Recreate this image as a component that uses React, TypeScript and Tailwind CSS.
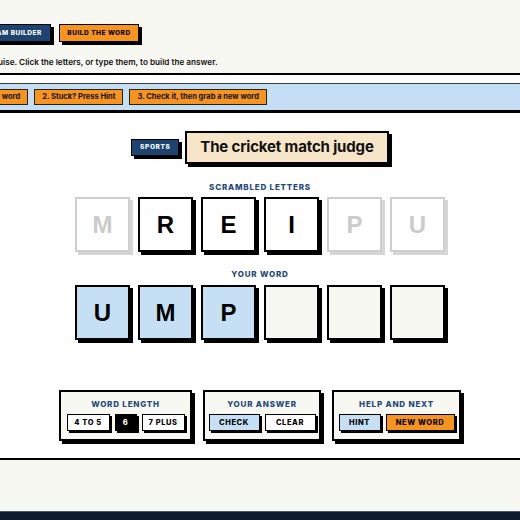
import React, { useState } from "react";

type TileState = "active" | "used" | "filled" | "empty";

const tileStyles: Record<TileState, string> = {
  active: "bg-white border-black shadow-[3px_3px_0_#000] text-black",
  used: "bg-white border-[#cfcfcf] shadow-[3px_3px_0_#d6d6d6] text-[#cbcbcb]",
  filled: "bg-[#c5e0f4] border-black shadow-[3px_3px_0_#000] text-black",
  empty: "bg-[#f8f8f3] border-black shadow-[3px_3px_0_#000] text-black",
};

const Tile: React.FC<{ letter?: string; state: TileState }> = ({ letter, state }) => (
  <div
    className={`w-[55px] h-[55px] border-2 flex items-center justify-center text-[24px] font-bold font-['Liberation_Sans',Arial,sans-serif] ${tileStyles[state]}`}
  >
    {letter}
  </div>
);

const Label: React.FC<{ children: React.ReactNode }> = ({ children }) => (
  <div className="text-[8px] font-extrabold tracking-[0.1em] text-[#23497a] text-center leading-none">
    {children}
  </div>
);

const SmallButton: React.FC<{ children: React.ReactNode; tone?: "white" | "blue" | "orange" | "black"; width: string }> = ({
  children,
  tone = "white",
  width,
}) => {
  const tones = {
    white: "bg-white text-black",
    blue: "bg-[#c5e0f4] text-black",
    orange: "bg-[#f7941d] text-black",
    black: "bg-black text-white",
  };
  return (
    <button
      className={`${width} h-[17px] border-[1.5px] border-black shadow-[2px_2px_0_#000] text-[7.5px] font-extrabold tracking-[0.08em] leading-none flex items-center justify-center ${tones[tone]}`}
    >
      {children}
    </button>
  );
};

const Panel: React.FC<{ title: string; width: string; children: React.ReactNode }> = ({ title, width, children }) => (
  <div className={`${width} bg-[#f8f8f3] border-2 border-black shadow-[3px_3px_0_#000] pt-[8px] pb-[8px] px-[6px] flex flex-col items-center gap-[6px]`}>
    <Label>{title}</Label>
    <div className="flex gap-[5px]">{children}</div>
  </div>
);

const scrambled: { letter: string; used: boolean }[] = [
  { letter: "M", used: true },
  { letter: "R", used: false },
  { letter: "E", used: false },
  { letter: "I", used: false },
  { letter: "P", used: true },
  { letter: "U", used: true },
];

const tabClass =
  "h-[18px] border-[1.5px] border-black shadow-[3px_3px_0_#000] text-[6.5px] font-extrabold tracking-[0.08em] leading-none flex items-center justify-center";

export default function App() {
  const [answer] = useState(["U", "M", "P", "", "", ""]);

  return (
    <div className="min-h-screen bg-white text-[#111] font-['Inter','Liberation_Sans',sans-serif] overflow-hidden">
      {/* top bar with tabs and intro line */}
      <header className="bg-[#f8f8f3] border-b-2 border-black flex justify-center">
        <div className="w-[760px] shrink-0 px-5 pt-[24px] pb-[4px]">
          <nav className="flex gap-2">
            <button className={`w-[70px] bg-[#f8f8f3] text-black ${tabClass}`}>WORD GAMES</button>
            <button className={`w-[73px] bg-[#1d4371] text-white ${tabClass}`}>TEAM BUILDER</button>
            <button className={`w-[80px] bg-[#f7941d] text-black ${tabClass}`}>BUILD THE WORD</button>
          </nav>
          <p className="mt-[14px] text-[8.2px] font-semibold leading-[13px]">
            Each word comes in disguise. Click the letters, or type them, to build the answer.
          </p>
        </div>
      </header>

      <div className="h-2 bg-white" />

      {/* how-to-play steps */}
      <div className="bg-[#c4dff3] border-t border-[#3a3a3a] border-b-[3px] border-b-black flex justify-center">
        <div className="w-[760px] shrink-0 px-5 py-[5px] flex gap-[6px]">
          {["1. Read the clue, spell the word", "2. Stuck? Press Hint", "3. Check it, then grab a new word"].map((step) => (
            <span
              key={step}
              className="h-[16px] px-[7px] bg-[#f7941d] border-[1.5px] border-[#222] text-[7.5px] font-bold leading-none flex items-center whitespace-nowrap"
            >
              {step}
            </span>
          ))}
        </div>
      </div>

      <main className="bg-white border-b-2 border-black pt-[18px] pb-[17px] flex flex-col items-center">
        <div className="flex items-center gap-[6px]">
          <span className="w-[48px] h-[17px] bg-[#1d4371] text-white border-[1.5px] border-black shadow-[3px_3px_0_#000] text-[6.5px] font-extrabold tracking-[0.1em] flex items-center justify-center">
            SPORTS
          </span>
          <h1 className="h-[33px] px-[13px] bg-[#f6e6c7] border-2 border-black shadow-[3px_3px_0_#000] text-[15px] font-bold tracking-[-0.01em] flex items-center whitespace-nowrap">
            The cricket match judge
          </h1>
        </div>

        <div className="mt-[19px]">
          <Label>SCRAMBLED LETTERS</Label>
        </div>
        <div className="mt-[6px] flex gap-2">
          {scrambled.map((t, i) => (
            <Tile key={i} letter={t.letter} state={t.used ? "used" : "active"} />
          ))}
        </div>

        <div className="mt-[18px]">
          <Label>YOUR WORD</Label>
        </div>
        <div className="mt-[7px] flex gap-2">
          {answer.map((l, i) => (
            <Tile key={i} letter={l} state={l ? "filled" : "empty"} />
          ))}
        </div>

        {/* controls */}
        <div className="mt-[50px] flex gap-[11px]">
          <Panel title="WORD LENGTH" width="w-[133px]">
            <SmallButton width="w-[43px]">4 TO 5</SmallButton>
            <SmallButton width="w-[22px]" tone="black">6</SmallButton>
            <SmallButton width="w-[43px]">7 PLUS</SmallButton>
          </Panel>
          <Panel title="YOUR ANSWER" width="w-[118px]">
            <SmallButton width="w-[51px]" tone="blue">CHECK</SmallButton>
            <SmallButton width="w-[51px]">CLEAR</SmallButton>
          </Panel>
          <Panel title="HELP AND NEXT" width="w-[129px]">
            <SmallButton width="w-[42px]" tone="blue">HINT</SmallButton>
            <SmallButton width="w-[69px]" tone="orange">NEW WORD</SmallButton>
          </Panel>
        </div>
      </main>

      <footer>
        <div className="h-[51px] bg-[#f8f8f3]" />
        <div className="h-[60px] bg-[#0d1b2e] border-t border-[#4a5668]" />
      </footer>
    </div>
  );
}
